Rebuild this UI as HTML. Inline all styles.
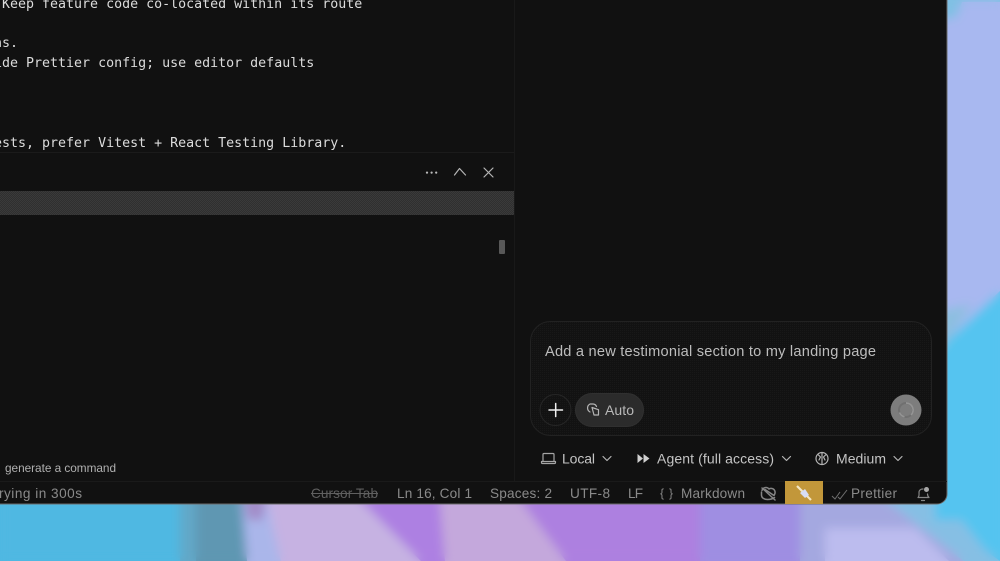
<!DOCTYPE html>
<html><head><meta charset="utf-8"><style>
html,body{margin:0;padding:0;background:#111;width:1000px;height:561px;overflow:hidden}
svg{display:block}
.fg{filter:blur(.3px)}
.m{font-family:"DejaVu Sans Mono","Liberation Mono",monospace;font-size:13.3px;fill:#dcdcdc}
.s{font-family:"Liberation Sans",sans-serif;font-size:14px;fill:#c4c4c4}
.t{font-family:"Liberation Sans",sans-serif;font-size:13.6px;fill:#8a8a8a}
.i{fill:none;stroke:#b5b5b5;stroke-width:1.2;stroke-linecap:round;stroke-linejoin:round}
.j{fill:none;stroke:#858585;stroke-width:1.2;stroke-linecap:round;stroke-linejoin:round}
</style></head><body>
<svg width="1000" height="561" viewBox="0 0 1000 561" xmlns="http://www.w3.org/2000/svg">
<defs>
<filter id="b" filterUnits="userSpaceOnUse" x="0" y="0" width="1000" height="561"><feGaussianBlur stdDeviation="5"/></filter>
<pattern id="d" width="2" height="2" patternUnits="userSpaceOnUse"><rect width="2" height="2" fill="#2f2f2f"/><rect width="1" height="1" fill="#3a3a3a"/><rect x="1" y="1" width="1" height="1" fill="#3a3a3a"/></pattern>
<pattern id="e" width="2" height="2" patternUnits="userSpaceOnUse"><rect width="2" height="2" fill="#121212"/><rect width="1" height="1" fill="#181818"/></pattern>
<g id="bg">
<rect width="1000" height="561" fill="#a8b8f0"/>
<polygon points="0,480 185,480 180,561 0,561" fill="#4fb8e2"/>
<polygon points="180,480 198,480 196,561 180,561" fill="#62a8c8"/>
<polygon points="196,480 240,480 247,561 196,561" fill="#5e97b2"/>
<polygon points="240,480 268,480 262,530 250,530" fill="#a38cc8"/>
<polygon points="247,520 285,520 298,561 247,561" fill="#aab6ea"/>
<polygon points="262,480 340,480 421,561 281,561" fill="#c6b2e2"/>
<polygon points="340,480 445,480 445,561 421,561" fill="#ad80e2"/>
<polygon points="438,480 505,480 566,561 445,561" fill="#c4a8dc"/>
<polygon points="505,480 700,480 700,561 566,561" fill="#ad80e0"/>
<polygon points="700,480 805,480 800,561 700,561" fill="#9f8ee2"/>
<polygon points="800,480 860,480 964,561 800,561" fill="#a4a8e0"/>
<polygon points="825,528 915,528 949,561 825,561" fill="#bcbcee"/>
<polygon points="860,480 1000,480 1000,561 964,561" fill="#86bfe4"/>
<polygon points="945,480 1000,480 1000,561 985,550 955,512" fill="#55c4f0"/>
<polygon points="935,352 1000,291 1000,520 935,520" fill="#55c4f0"/>
<polygon points="935,312 972,304 942,350" fill="#8cbfe0"/>
<polygon points="935,0 1000,0 1000,2 962,2 956,18 935,20" fill="#80c0e4"/>
</g>
</defs>
<use href="#bg"/>
<use href="#bg" filter="url(#b)"/>
<path d="M0 0H947V494a10 10 0 0 1-10 10H0Z" fill="#111"/>
<path d="M947 0V494a10 10 0 0 1-10 10H0" fill="none" stroke="#6a6a6a" stroke-width="1"/>
<g class="fg">
<text class="m" x="2" y="8">Keep feature code co-located within its route</text>
<text class="m" x="-6" y="47">ns.</text>
<text class="m" x="-6" y="67">ide Prettier config; use editor defaults</text>
<text class="m" x="-6" y="147">ests, prefer Vitest + React Testing Library.</text>

<rect x="0" y="152" width="514" height="1" fill="#1b1b1b"/>
<rect x="514" y="0" width="1" height="481" fill="#191919"/>
<rect x="0" y="191" width="514" height="24" fill="url(#d)"/>
<rect x="499" y="240" width="6" height="14" rx="1" fill="#585858"/>
<circle cx="427" cy="172.600" r="1.100" fill="#bbb"/><circle cx="431.600" cy="172.600" r="1.100" fill="#bbb"/><circle cx="436.200" cy="172.600" r="1.100" fill="#bbb"/>
<path class="i" d="M454.500 175L459.500 168.500 465.500 175"/>
<path class="i" d="M484 168L493 177M493 168L484 177"/>
<text x="5" y="472" textLength="111" style="font-family:'Liberation Sans',sans-serif;font-size:11.800px;fill:#b0b0b0">generate a command</text>

<rect x="530.500" y="321.500" width="401" height="114" rx="20" fill="url(#e)" stroke="#222"/>
<text class="s" x="545" y="356" textLength="331" style="font-size:14.600px;fill:#bdbdbd">Add a new testimonial section to my landing page</text>
<circle cx="555.500" cy="410" r="15.500" fill="none" stroke="#262626"/>
<path d="M549 410H562.500M555.700 403.500V416.500" stroke="#efefef" stroke-width="1.500" stroke-linecap="round" fill="none"/>
<rect x="575.500" y="393.500" width="68" height="33" rx="16.500" fill="#2b2b2b" stroke="#303030"/>
<path class="i" d="M590 412a4.500 4.500 0 0 1 0-8h3a4 4 0 0 1 3.500 2.500"/>
<path class="i" d="M592 407.500l6.500 2.200v5.300h-4.500z"/>
<text class="s" x="605" y="415" textLength="29" style="fill:#b8b8b8">Auto</text>
<circle cx="906" cy="410" r="15.500" fill="#7d7d7d"/>
<circle cx="906" cy="410" r="7" fill="none" stroke="#707070" stroke-width="2"/>
<path d="M906 403a7 7 0 0 1 5 12M899.500 412.500a7 7 0 0 0 5 4.300" fill="none" stroke="#949494" stroke-width="1.700"/>

<path class="i" d="M543 454.500a1 1 0 0 1 1-1h9a1 1 0 0 1 1 1v7h-11zM541.500 461.500h14v1a1 1 0 0 1-1 1h-12a1 1 0 0 1-1-1z" style="stroke:#a5a5a5"/>
<text class="s" x="562" y="463.500" textLength="33">Local</text>
<path class="i" d="M603 456.500l4 4 4-4"/>
<path d="M637.500 454l5.500 4.500-5.500 4.500zM643.500 454l6 4.500-6 4.500z" fill="#d0d0d0"/>
<text class="s" x="657" y="463.500" textLength="117">Agent (full access)</text>
<path class="i" d="M782.500 456.500l4 4 4-4"/>
<circle cx="822" cy="458.500" r="6" class="i"/>
<path class="i" d="M822 452.500v12M818.500 455l2 2-1.500 3M825.500 455l-2 2 1.500 3"/>
<text class="s" x="836" y="463.500" textLength="50">Medium</text>
<path class="i" d="M894 456.500l4 4 4-4"/>

<rect x="0" y="481" width="785" height="1" fill="#1a1a1a"/>
<rect x="823" y="481" width="124" height="1" fill="#1a1a1a"/>
<text class="t" x="-1" y="498" textLength="83">rying in 300s</text>
<text class="t" x="311" y="498" textLength="67" style="fill:#5f5f5f">Cursor Tab</text>
<rect x="311" y="493" width="67" height="1" fill="#5f5f5f"/>
<text class="t" x="397" y="498" textLength="75">Ln 16, Col 1</text>
<text class="t" x="490" y="498" textLength="62">Spaces: 2</text>
<text class="t" x="570" y="498" textLength="40">UTF-8</text>
<text class="t" x="628" y="498" textLength="15">LF</text>
<text class="t" x="660" y="497" textLength="13" style="font-size:12px">{}</text>
<text class="t" x="681" y="498" textLength="64">Markdown</text>
<g class="j" style="stroke-width:1.500">
<path d="M762 490.500a4 4 0 0 1 7-1.500 4 4 0 0 1 6 2.500c.5 2-.5 3-1 4l-9-6M762 488l13 12"/>
<path d="M761.500 495c0 3 3 4.500 6 4.500s5-.5 7-2M761.500 492v3"/>
</g>
<rect x="785" y="481" width="38" height="23" fill="#c2973a"/>
<path d="M797 486l14 14" stroke="#f3e7c5" stroke-width="2.200"/>
<path d="M800 493l5-4 4 6-4 3z" fill="#d8def5"/>
<path d="M832 496l3 3 5-7M838 497l2 2 7-9" fill="none" stroke="#707070" stroke-width="1"/>
<text class="t" x="851" y="498" textLength="46">Prettier</text>
<path class="j" d="M918 497.500c1.500-1.500 1-3 1-5 0-2 1.500-3.500 4-3.500M929 497.500h-11M921.500 500.500h3M927.500 494c0 1.500.3 2.500 1.500 3.500"/>
<circle cx="926.500" cy="489.500" r="2.500" fill="#a8a8a8"/>
</g>
</svg>
</body></html>
